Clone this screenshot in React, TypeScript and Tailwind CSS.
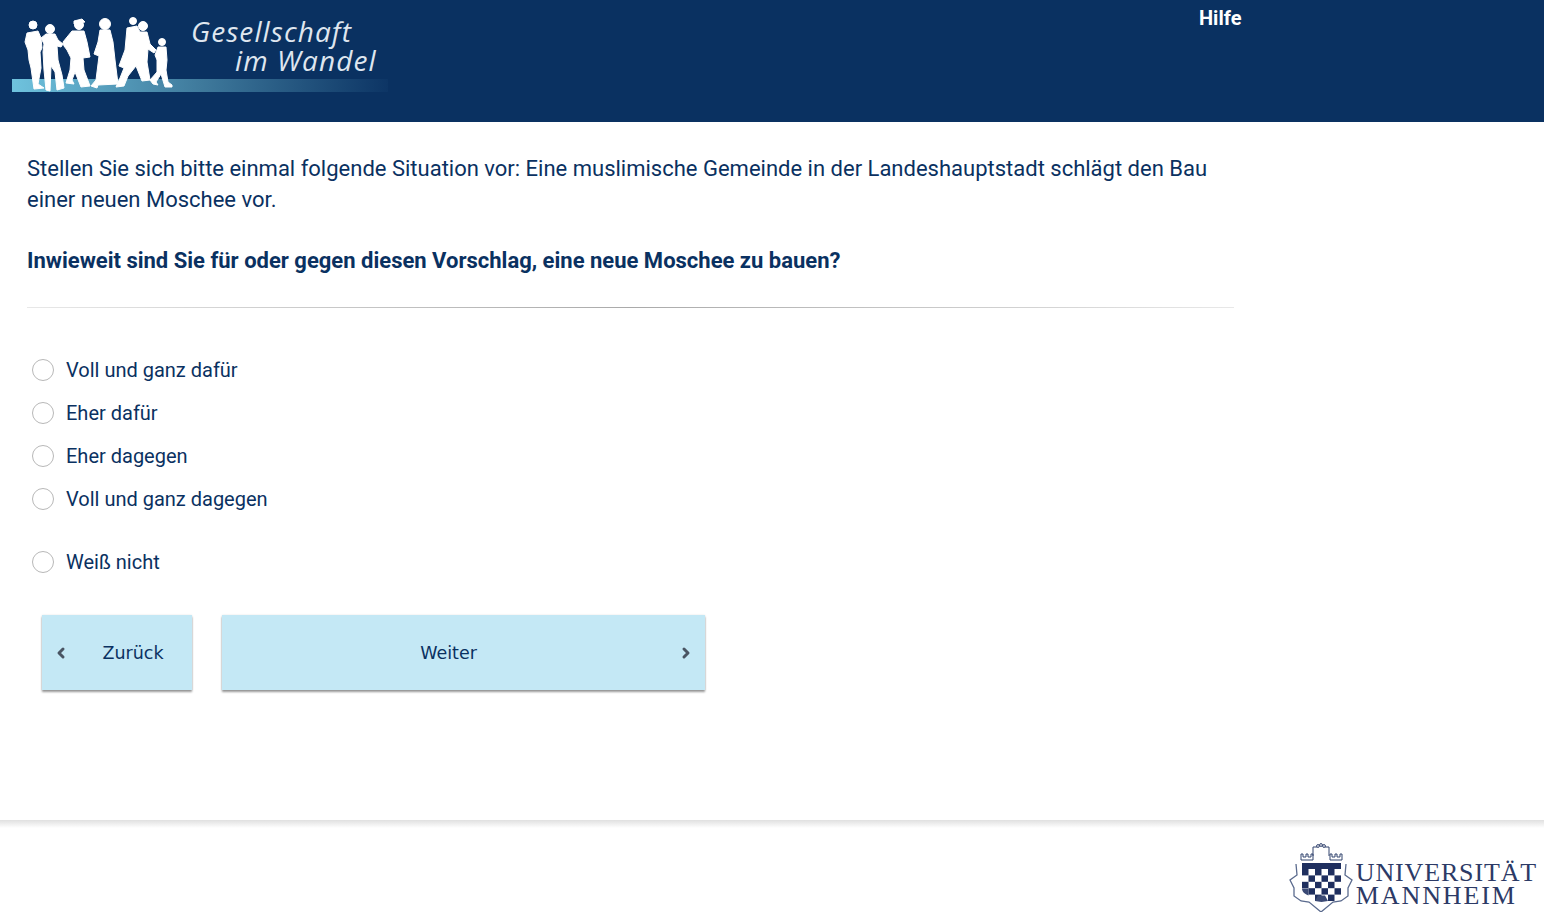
import { ChevronLeft, ChevronRight } from 'lucide-react';

const ROBOTO = "font-['Roboto',sans-serif]";
// dark squares of the crest's checker field, as [column, row]
const CHECKS = [
  [0, 0], [2, 0], [4, 0], [1, 1], [3, 1], [5, 1], [0, 2], [2, 2], [4, 2],
  [1, 3], [3, 3], [5, 3], [2, 4], [4, 4],
];

function StudyLogo() {
  return (
    <div className="relative mt-[5px] ml-[12px] h-[100px] w-[376px]">
      <div className="absolute left-0 top-[74px] h-[13px] w-full bg-gradient-to-r from-[#6fc3de] via-[#3f7a9c] to-[#0d3565]" />
      <svg className="absolute left-0 top-0" width="170" height="95" viewBox="12 5 170 95" fill="#ffffff" stroke="#ffffff" strokeWidth="1" strokeLinejoin="round">
        <circle cx="33" cy="25" r="4" />
        <path d="M27 33L38 31L41 38L42 48L40 52L41 68L38 84L44 88L34 89L31 68L29 60L28 50L25 42z" />
        <circle cx="50" cy="29" r="4.5" />
        <path d="M41 38L46 34L55 34L58 40L63 44L61 47L57 46L58 60L62 75L64 88L57 90L55 72L51 66L50 91L46 90L44 70L43 52L44 44z" />
        <circle cx="79" cy="25" r="4.5" />
        <path d="M74 21L82 19L85 22L74 24z" />
        <path d="M63 42L72 31L84 31L87 42L90 57L83 58L84 70L90 86L81 87L75 72L72 80L74 84L66 83L70 70L71 58L67 50L64 46z" />
        <circle cx="105" cy="24" r="5.5" />
        <path d="M100 30L110 30L113 42L115 60L118 84L98 85L97 88L91 86L96 80L99 56L94 54L98 42z" />
        <circle cx="133" cy="21" r="3.5" />
        <circle cx="143" cy="26" r="4.5" />
        <path d="M127 28L137 26L140 32L147 32L150 44L156 50L154 53L148 49L147 62L150 80L142 81L136 66L128 76L124 86L116 87L120 78L124 68L119 66L125 50z" />
        <circle cx="162" cy="42" r="3.5" />
        <path d="M158 47L166 47L167 60L166 70L168 82L172 85L172 87L165 87L161 74L156 82L158 85L153 84L150 80L157 72L157 60L155 55z" />
      </svg>
      <div className="absolute left-[179px] top-[12px] w-[190px] text-[28px] italic leading-[29px] tracking-[1.1px] text-[#dfe6ef] font-['Open_Sans',sans-serif]">
        <div>Gesellschaft</div>
        <div className="pl-[44px]">im Wandel</div>
      </div>
    </div>
  );
}

function UniLogo() {
  return (
    <div className="mr-[7px] mt-[14px] flex h-[70px] items-start">
      <svg width="66" height="70" viewBox="0 0 66 70" fill="none" stroke="#33446f" strokeWidth="1">
        {/* crown */}
        <path d="M13 18v-6h2v3h3v-3h2v3h3v-3h2v6zM42 18v-6h2v3h3v-3h2v3h3v-3h2v6z" />
        <path d="M25 14V5h4M41 14V5h-4" />
        <circle cx="30" cy="4" r="1.4" />
        <circle cx="33" cy="3" r="1.4" />
        <circle cx="36" cy="4" r="1.4" />
        {/* scrolled outline */}
        <path stroke="#5b6b8e" strokeWidth="1.3" d="M8 22l1 11-7 5 4 8v8l7 5 8 1 12 10 12-10 8-1 7-5v-8l4-8-7-5 1-11" />
        {/* shield */}
        <path stroke="none" fill="#ffffff" d="M14 21h39v26c0 6-9 10-19.500 13C23 57 14 53 14 47z" />
        <path stroke="none" fill="#1f2f5f" d="M14 21h39v6H14z" />
        {CHECKS.map(([col, row]) => (
          <rect key={`${col}-${row}`} x={14 + col * 6.5} y={27 + row * 6.4} width="6.5" height="6.4" fill="#1f2f5f" stroke="none" />
        ))}
        <path stroke="none" fill="#3b4a75" d="M27 59l6.500 1 6.500-1-3-5.500h-7zM14 46.500c0 3 2 5 6.500 7V46.500z" />
      </svg>
      <div className="ml-[2px] pt-[19px] font-['Liberation_Serif',serif] text-[26px] leading-[23px] text-[#2c3a66]">
        <div className="tracking-[0.85px]">UNIVERSITÄT</div>
        <div className="tracking-[1.9px]">MANNHEIM</div>
      </div>
    </div>
  );
}

function Option({ label, extra }: { label: string; extra?: string }) {
  return (
    <label className={`flex h-[43px] items-center pl-[5px] ${extra ?? ''}`}>
      <span className="h-[22px] w-[22px] rounded-full border border-[#b8b8b8] bg-white" />
      <span className="ml-[12px] text-[20px]">{label}</span>
    </label>
  );
}

export default function App() {
  return (
    <div className={`min-h-[920px] bg-white text-[#0a3161] ${ROBOTO}`}>
      <header className="flex h-[122px] items-start bg-[#0a3161]">
        <StudyLogo />
        <a className="ml-[811px] mt-[5px] text-[20px] font-bold leading-[26px] text-white">Hilfe</a>
      </header>

      <main className="h-[698px] w-[1234px] pl-[27px]">
        <p className="pt-[31px] text-[22px] leading-[31px]">
          Stellen Sie sich bitte einmal folgende Situation vor: Eine muslimische Gemeinde in der Landeshauptstadt schlägt den Bau einer neuen Moschee vor.
        </p>
        <p className="mt-[30px] text-[22px] font-bold leading-[31px]">
          Inwieweit sind Sie für oder gegen diesen Vorschlag, eine neue Moschee zu bauen?
        </p>
        <div className="mt-[31px] h-px bg-gradient-to-r from-[#e8e8e8] via-[#aaaaaa] to-[#e8e8e8]" />

        <div className="mt-[40px]">
          <Option label="Voll und ganz dafür" />
          <Option label="Eher dafür" />
          <Option label="Eher dagegen" />
          <Option label="Voll und ganz dagegen" />
          <Option label="Weiß nicht" extra="mt-[20px]" />
        </div>

        <div className="ml-[15px] mt-[32px] flex gap-[30px] font-['DejaVu_Sans',sans-serif] text-[17.500px]">
          <button className="flex h-[75px] w-[150px] items-center bg-[#c4e8f5] pl-[11px] shadow-[0_2px_2px_rgba(0,0,0,0.4),0_0_2px_rgba(0,0,0,0.1)]">
            <ChevronLeft size={16} strokeWidth={4.5} className="text-[#4a5563]" />
            <span className="flex-1 pl-[5px] pt-[1px] text-center">Zurück</span>
          </button>
          <button className="flex h-[75px] w-[483px] items-center bg-[#c4e8f5] pr-[11px] shadow-[0_2px_2px_rgba(0,0,0,0.4),0_0_2px_rgba(0,0,0,0.1)]">
            <span className="flex-1 pr-[3px] pt-[1px] text-center">Weiter</span>
            <ChevronRight size={16} strokeWidth={4.5} className="text-[#4a5563]" />
          </button>
        </div>
      </main>

      <footer className="h-[102px] bg-white">
        <div className="h-[8px] bg-gradient-to-b from-[#e0e0e0] to-white" />
        <div className="flex justify-end">
          <UniLogo />
        </div>
      </footer>
    </div>
  );
}
